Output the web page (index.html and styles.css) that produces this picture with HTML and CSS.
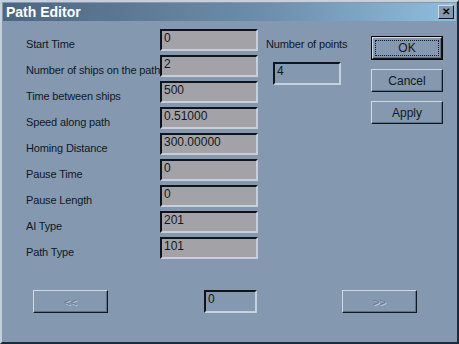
FILE: index.html
```html
<!DOCTYPE html>
<html lang="en">
<head>
  <meta charset="UTF-8" />
  <title>Path Editor</title>
  <link rel="stylesheet" href="styles.css">
</head>
<body>

  <div class="window">
    <div class="titlebar">
      <span class="title">Path Editor</span>
      <span class="close">&#x2715;</span>
    </div>

    <div class="content">
      <div class="form">
        <label>Start Time</label><div class="field">0</div>
        <label>Number of ships on the path</label><div class="field">2</div>
        <label>Time between ships</label><div class="field">500</div>
        <label>Speed along path</label><div class="field">0.51000</div>
        <label>Homing Distance</label><div class="field">300.00000</div>
        <label>Pause Time</label><div class="field">0</div>
        <label>Pause Length</label><div class="field">0</div>
        <label>AI Type</label><div class="field">201</div>
        <label>Path Type</label><div class="field">101</div>
      </div>

      <div class="points">
        <label>Number of points</label>
        <div class="field plain points-field">4</div>
      </div>

      <div class="buttons">
        <div class="btn default"><span class="focus">OK</span></div>
        <div class="btn">Cancel</div>
        <div class="btn">Apply</div>
      </div>
    </div>

    <div class="nav">
      <div class="btn disabled nav-btn">&lt;&lt;</div>
      <div class="field plain nav-field">0</div>
      <div class="btn disabled nav-btn">&gt;&gt;</div>
    </div>
  </div>

</body>
</html>
```

FILE: styles.css
```css
body {
  margin: 0;
  font-family: "Liberation Sans", Arial, sans-serif;
  font-size: 12px;
  color: #101820;
}
.window {
  width: 459px;
  height: 344px;
  box-sizing: border-box;
  background: #8499b0;
  border: 2px solid;
  border-color: #c4d0dc #1e2a36 #1e2a36 #c4d0dc;
  padding: 1px;
}
.titlebar {
  height: 18px;
  display: flex;
  align-items: center;
  justify-content: space-between;
  padding: 0 2px 0 3px;
  background: linear-gradient(to right, #4b6682, #6e90ac 60%, #8fbedc);
}
.title {
  color: #fff;
  font-weight: bold;
  font-size: 14px;
}
.close {
  box-sizing: border-box;
  width: 16px;
  height: 14px;
  background: #8499b0;
  border: 1px solid;
  border-color: #d0dae4 #101820 #101820 #d0dae4;
  font-size: 10px;
  font-weight: bold;
  line-height: 12px;
  text-align: center;
  color: #000;
}
.content {
  display: flex;
  padding: 8px 0 0 23px;
  height: 240px;
}
.form {
  display: grid;
  grid-template-columns: 134px 98px;
  grid-auto-rows: 22px;
  row-gap: 4px;
}
label {
  align-self: end;
  line-height: 14px;
  font-size: 11px;
  letter-spacing: -0.15px;
  white-space: nowrap;
}
.field {
  box-sizing: border-box;
  background: #a3a3a7;
  border: 2px solid;
  border-color: #101418 #c6d0dc #c6d0dc #101418;
  padding: 0 0 0 2px;
  line-height: 14px;
  font-size: 12px;
}
.plain {
  background: #8499b0;
}
.points {
  display: flex;
  flex-direction: column;
  align-items: flex-start;
  margin-left: 8px;
  width: 105px;
}
.points label {
  align-self: flex-start;
  height: 22px;
  display: flex;
  align-items: flex-end;
}
.points-field {
  width: 68px;
  height: 23px;
  margin: 11px 0 0 7px;
}
.buttons {
  display: flex;
  flex-direction: column;
  gap: 9px;
  padding-top: 7px;
}
.btn {
  box-sizing: border-box;
  width: 72px;
  height: 23px;
  display: flex;
  align-items: center;
  justify-content: center;
  border: 1px solid;
  border-color: #d0dae4 #101820 #101820 #d0dae4;
  box-shadow: inset -1px -1px #5e7088;
  font-size: 12px;
}
.btn.default {
  height: 24px;
  outline: 1px solid #000;
  outline-offset: -1px;
  border-width: 2px;
}
.focus {
  border: 1px dotted #101820;
  width: 62px;
  height: 14px;
  line-height: 14px;
  text-align: center;
}
.nav {
  display: flex;
  align-items: center;
  padding: 21px 0 0 30px;
}
.nav-btn {
  width: 75px;
}
.disabled {
  color: #66788e;
  text-shadow: 1px 1px #c4d0dc;
  font-size: 11px;
}
.nav-field {
  width: 53px;
  height: 23px;
  margin: 0 85px 0 96px;
}
```
